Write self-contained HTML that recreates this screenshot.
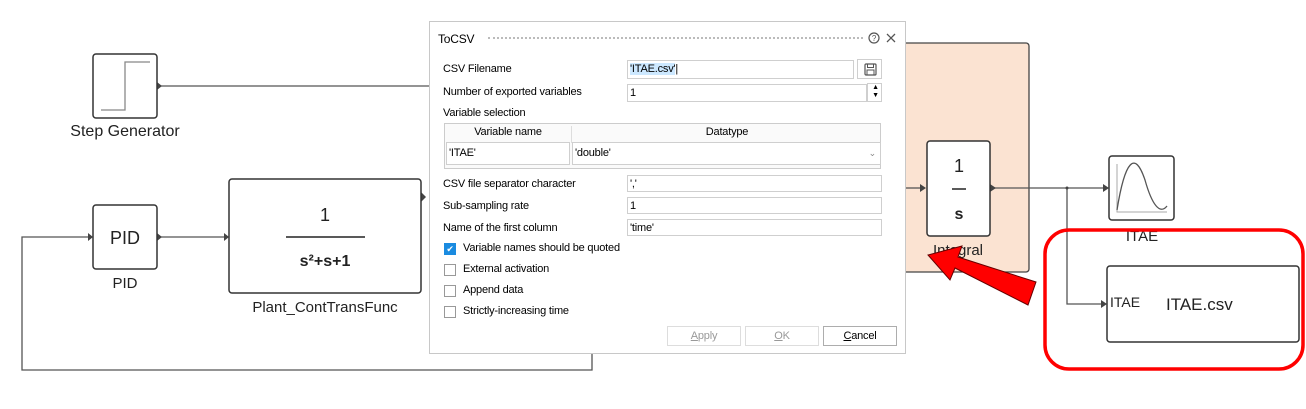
<!DOCTYPE html>
<html><head><meta charset="utf-8"><style>
body{margin:0;width:1306px;height:409px;background:#fff;position:relative;overflow:hidden;font-family:"Liberation Sans",sans-serif}
.a{position:absolute}
#dlg{position:absolute;left:429px;top:21px;width:475px;height:331px;background:#fff;border:1px solid #c8c8c8;font-size:11px;color:#000;letter-spacing:-0.2px}
.l{position:absolute;left:13px}
.f{position:absolute;border:1px solid #cfcfcf;background:#fff;height:16px;line-height:16px;padding-left:2px;box-sizing:border-box}
.cb{position:absolute;left:14px;width:12px;height:12px;border:1px solid #999;box-sizing:border-box;background:#fff}
.btn{position:absolute;top:304px;width:74px;height:20px;border:1px solid #adadad;box-sizing:border-box;text-align:center;line-height:18px;background:#fff}
</style></head><body>
<svg class="a" style="left:0;top:0" width="1306" height="409">
<rect x="870" y="43" width="159" height="229" rx="3" fill="#fbe3d2" stroke="#444" stroke-width="1.3"/>
<g fill="none" stroke="#555" stroke-width="1.3">
<line x1="160" y1="86" x2="430" y2="86"/>
<polyline points="592,352 592,370 22,370 22,237 88,237"/>
<line x1="160" y1="237" x2="224" y2="237"/>
<line x1="906" y1="188" x2="922" y2="188"/>
<line x1="994" y1="188" x2="1104" y2="188"/>
<polyline points="1067,188 1067,304 1102,304"/>
</g>
<g fill="#444">
<polygon points="157,82 162,86 157,90"/><polygon points="88,233 93,237 88,241"/><polygon points="157,233 162,237 157,241"/><polygon points="224,233 229,237 224,241"/><polygon points="421,192 426,197 421,202"/>
<polygon points="920,184 926,188 920,192"/><polygon points="990,184 996,188 990,192"/><polygon points="1103,184 1109,188 1103,192"/><polygon points="1101,300 1107,304 1101,308"/><circle cx="1067" cy="188" r="1.5"/>
</g>
<g fill="#fff" stroke="#333" stroke-width="1.5">
<rect x="93" y="54" width="64" height="64" rx="3"/>
<rect x="93" y="205" width="64" height="64" rx="3"/>
<rect x="229" y="179" width="192" height="114" rx="3"/>
<rect x="927" y="141" width="63" height="95" rx="3"/>
<rect x="1109" y="156" width="65" height="64" rx="3"/>
<rect x="1107" y="266" width="192" height="76" rx="3"/>
</g>
<polyline points="101,110 125,110 125,62 150,62" fill="none" stroke="#888" stroke-width="1.3"/>
<polyline points="1117,164 1117,212 1167,212" fill="none" stroke="#aaa" stroke-width="1"/>
<path d="M1117,210 C1125,160 1135,150 1145,180 C1152,205 1160,215 1167,206" fill="none" stroke="#555" stroke-width="1.3"/>
<line x1="286" y1="237" x2="365" y2="237" stroke="#222" stroke-width="1.5"/>
<line x1="952" y1="189" x2="966" y2="189" stroke="#222" stroke-width="1.5"/>
<g font-family="Liberation Sans" fill="#222">
<text x="125" y="136" font-size="16" text-anchor="middle">Step Generator</text>
<text x="125" y="244" font-size="18" text-anchor="middle">PID</text>
<text x="125" y="288" font-size="15" text-anchor="middle">PID</text>
<text x="325" y="221" font-size="18" text-anchor="middle">1</text>
<text x="325" y="266" font-size="16" text-anchor="middle" font-weight="bold">s²+s+1</text>
<text x="325" y="312" font-size="15" text-anchor="middle">Plant_ContTransFunc</text>
<text x="959" y="172" font-size="18" text-anchor="middle">1</text>
<text x="959" y="219" font-size="16" text-anchor="middle" font-weight="bold">s</text>
<text x="958" y="255" font-size="15" text-anchor="middle">Integral</text>
<text x="1142" y="241" font-size="15" text-anchor="middle">ITAE</text>
<text x="1110" y="307" font-size="14">ITAE</text>
<text x="1166" y="310" font-size="17">ITAE.csv</text>
</g>
<rect x="1045" y="230" width="258" height="139" rx="24" fill="none" stroke="#f00" stroke-width="3.5"/>
<polygon points="1036,282 1028,305 955,268 950,280 928,255 962,246 958,257" fill="#f00" stroke="#600" stroke-width="1"/>
</svg>
<div id="dlg">
<div class="a" style="left:8px;top:10px;font-size:12px">ToCSV</div>
<div class="a" style="left:58px;top:15px;width:375px;border-top:2px dotted #bbb;height:0"></div>
<svg class="a" style="left:438px;top:9px" width="34" height="14"><circle cx="6" cy="7" r="5" fill="none" stroke="#555" stroke-width="1.2"/><text x="6" y="10" font-size="8" text-anchor="middle" fill="#555" font-family="Liberation Sans">?</text><path d="M19,3 L27,11 M27,3 L19,11" stroke="#555" stroke-width="1.3"/></svg>
<div class="l" style="top:41px">CSV Filename</div>
<div class="f" style="left:197px;top:38px;width:227px;height:19px"><span style="background:#cce8ff">'ITAE.csv'</span>|</div>
<div class="f" style="left:427px;top:37px;width:25px;height:20px"><svg class="a" style="left:6px;top:3px" width="13" height="13"><rect x="1" y="1" width="11" height="11" rx="1" fill="none" stroke="#555" stroke-width="1.2"/><rect x="3.5" y="1" width="6" height="3.5" fill="none" stroke="#555"/><rect x="3" y="7" width="7" height="5" fill="none" stroke="#555"/></svg></div>
<div class="l" style="top:64px">Number of exported variables</div>
<div class="f" style="left:197px;top:62px;width:240px;height:18px">1</div>
<div class="f" style="left:437px;top:61px;width:15px;height:19px;font-size:7px;line-height:8px;text-align:center">▲<br>▼</div>
<div class="l" style="top:85px">Variable selection</div>
<div class="a" style="left:14px;top:101px;width:437px;height:46px;border:1px solid #ccc;box-sizing:border-box;background:#fafafa">
<div class="a" style="left:0;top:2px;width:126px;text-align:center">Variable name</div>
<div class="a" style="left:126px;top:2px;width:310px;text-align:center;border-left:1px solid #ddd;height:17px">Datatype</div>
<div class="f" style="left:1px;top:18px;width:124px;height:23px;line-height:21px">'ITAE'</div>
<div class="f" style="left:127px;top:18px;width:309px;height:23px;line-height:21px">'double'<span style="position:absolute;right:4px;color:#888;font-size:9px">⌄</span></div>
</div>
<div class="l" style="top:156px">CSV file separator character</div>
<div class="f" style="left:197px;top:153px;width:255px;height:17px">','</div>
<div class="l" style="top:178px">Sub-sampling rate</div>
<div class="f" style="left:197px;top:175px;width:255px;height:17px">1</div>
<div class="l" style="top:200px">Name of the first column</div>
<div class="f" style="left:197px;top:197px;width:255px;height:17px">'time'</div>
<div class="cb" style="top:221px;background:#1a8be0;border-color:#1a8be0;color:#fff;font-size:9px;line-height:10px;text-align:center">✔</div>
<div class="a" style="left:33px;top:220px">Variable names should be quoted</div>
<div class="cb" style="top:242px"></div><div class="a" style="left:33px;top:241px">External activation</div>
<div class="cb" style="top:263px"></div><div class="a" style="left:33px;top:262px">Append data</div>
<div class="cb" style="top:284px"></div><div class="a" style="left:33px;top:283px">Strictly-increasing time</div>
<div class="btn" style="left:237px;color:#999;border-color:#ddd"><u>A</u>pply</div>
<div class="btn" style="left:315px;color:#999;border-color:#ddd"><u>O</u>K</div>
<div class="btn" style="left:393px"><u>C</u>ancel</div>
</div>
</body></html>
